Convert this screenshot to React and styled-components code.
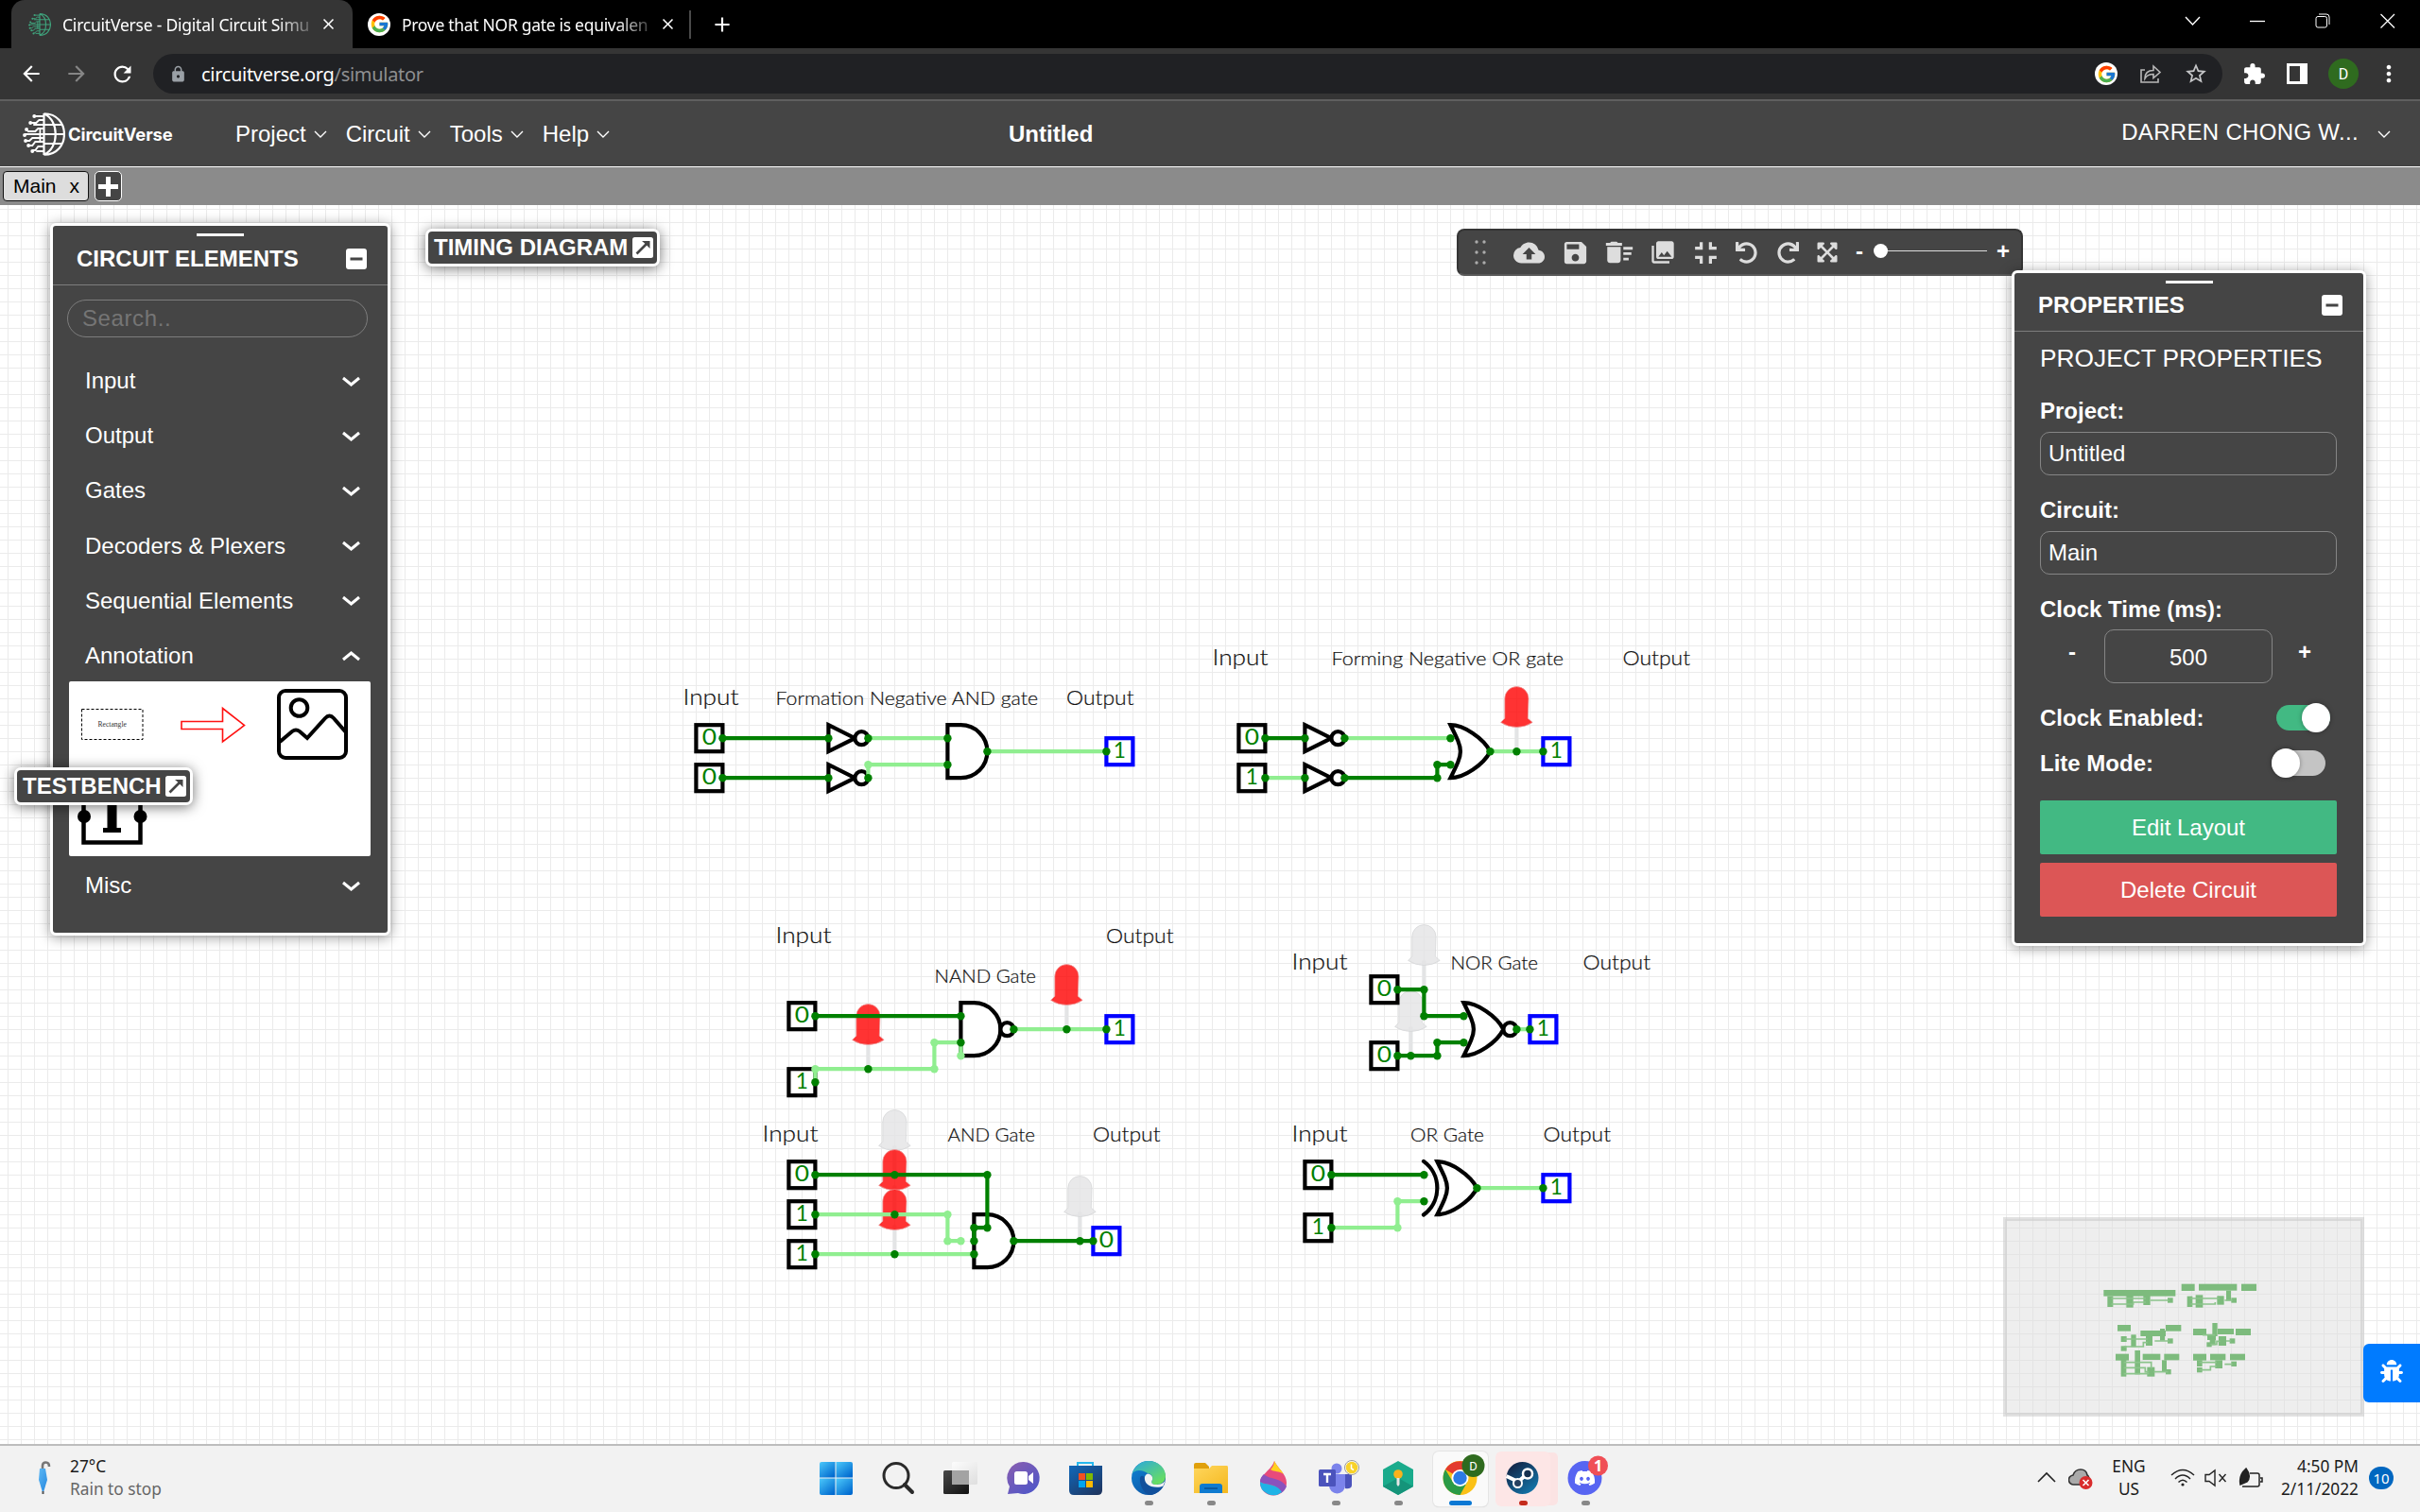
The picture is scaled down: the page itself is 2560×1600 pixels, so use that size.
import React from "react";
import styled, { createGlobalStyle } from "styled-components";
import {
  MdBackup, MdSave, MdDeleteSweep, MdPhotoLibrary, MdFullscreenExit, MdExtension,
  MdStarBorder, MdLock, MdAdd, MdClose, MdMoreVert, MdArrowBack, MdArrowForward, MdRefresh,
} from "react-icons/md";
import { FaBug, FaExpandArrowsAlt, FaUndo, FaRedo, FaDiscord } from "react-icons/fa";
import { FcGoogle } from "react-icons/fc";

const UI = `"Liberation Sans", Arial, sans-serif`;
const OS = `"Noto Sans", "Open Sans", sans-serif`;
const DARK = "#454545";

const Global = createGlobalStyle`
  * { box-sizing: border-box; }
  body { margin: 0; background: #fff; overflow: hidden; }
  svg { display: block; flex: none; }
  button, input { font: inherit; }
`;

const Screen = styled.div`
  width: 2560px;
  height: 1600px;
  display: flex;
  flex-direction: column;
  font-family: ${UI};
  font-size: 24px;
  overflow: hidden;
`;

/* ---------- browser chrome ---------- */
const TabStrip = styled.div`
  height: 51px;
  background: #000;
  display: flex;
  align-items: stretch;
  padding-left: 12px;
  font-family: ${OS};
  font-size: 17.5px;
  color: #fff;
`;
const BrowserTab = styled.div`
  width: ${(p) => p.$w}px;
  display: flex;
  align-items: center;
  padding: 0 0 0 ${(p) => p.$pad}px;
  background: ${(p) => (p.$active ? "#353535" : "transparent")};
  border-radius: 14px 14px 0 0;
`;
const TabTitle = styled.div`
  width: 264px;
  margin-left: 12px;
  white-space: nowrap;
  letter-spacing: ${(p) => p.$ls}px;
  mask-image: linear-gradient(to right, #000 86%, transparent 103%);
`;
const TabClose = styled.div`
  margin-left: 8px;
`;
const Divider = styled.div`
  width: 2px;
  height: 30px;
  align-self: center;
  background: #4a4a4a;
`;
const NewTab = styled.div`
  align-self: center;
  margin-left: 20px;
`;
const WindowButtons = styled.div`
  margin-left: auto;
  display: flex;
  align-items: center;
  padding: 0 25px 8px 0;
  gap: 52px;
`;
const AddressRow = styled.div`
  height: 56px;
  background: #353535;
  border-bottom: 2px solid #5f5f5f;
  display: flex;
  align-items: center;
  padding: 0 19px 0 20px;
  color: #fff;
`;
const NavButtons = styled.div`
  display: flex;
  gap: 22px;
  width: 142px;
`;
const Omnibox = styled.div`
  width: 2189px;
  height: 42px;
  border-radius: 21px;
  background: #202124;
  display: flex;
  align-items: center;
  padding: 0 15px 0 17px;
  font-family: ${OS};
  font-size: 20px;
  letter-spacing: -0.3px;
`;
const Url = styled.div`
  margin-left: 15px;
  margin-right: auto;
  span { color: #8e8f91; }
`;
const OmniIcons = styled.div`
  display: flex;
  align-items: center;
  gap: 23px;
  color: #c4c5c7;
`;
const ExtIcons = styled.div`
  display: flex;
  align-items: center;
  margin-left: auto;
  gap: 22px;
`;
const Avatar = styled.div`
  width: 32px;
  height: 32px;
  margin-right: -4px;
  border-radius: 50%;
  background: #2f6b1f;
  display: grid;
  place-items: center;
  font: 16px Roboto, sans-serif;
`;
const GoogleDot = styled.div`
  width: 24px;
  height: 24px;
  border-radius: 50%;
  background: #fff;
  display: grid;
  place-items: center;
`;

/* ---------- site header ---------- */
const Header = styled.header`
  height: 70px;
  background: ${DARK};
  border-bottom: 1px solid #fff;
  color: #fff;
  display: grid;
  grid-template-columns: 249px 818px 89px 1fr;
  align-items: center;
`;
const Brand = styled.div`
  display: flex;
  align-items: center;
  padding-left: 24px;
  gap: 3px;
  font: 700 18.4px Inter, sans-serif;
  letter-spacing: -0.1px;
`;
const Menu = styled.nav`
  display: flex;
  gap: 21px;
`;
const MenuItem = styled.div`
  display: flex;
  align-items: center;
  gap: 9px;
`;
const HeaderTitle = styled.div`
  font-weight: 700;
`;
const User = styled.div`
  display: flex;
  align-items: center;
  justify-content: flex-end;
  gap: 21px;
  padding-right: 32px;
  span { position: relative; top: -2px; letter-spacing: 0.32px; }
`;
const CircuitTabs = styled.div`
  height: 40px;
  background: #8b8b8b;
  display: flex;
  align-items: center;
  padding: 0 3px;
  gap: 6px;
`;
const CircuitTab = styled.div`
  width: 91px;
  height: 32px;
  background: #ddd;
  border: 1px solid #111;
  border-radius: 4px;
  color: #000;
  font-size: 21px;
  display: flex;
  align-items: center;
  justify-content: space-between;
  padding: 0 9px 0 10px;
`;
const AddCircuit = styled.div`
  width: 29px;
  height: 32px;
  background: ${DARK};
  border: 1px solid #fff;
  border-radius: 5px;
  display: grid;
  place-items: center;
`;

/* ---------- workspace ---------- */
const Workspace = styled.main`
  position: relative;
  height: 1311px;
  background-color: #fff;
  background-image: linear-gradient(to right, #ebebeb 1px, transparent 1px),
    linear-gradient(to bottom, #ebebeb 1px, transparent 1px);
  background-size: 14px 14px;
  background-position: 8px 4px;
`;
const Floating = styled.section`
  position: absolute;
  left: ${(p) => p.$x}px;
  top: ${(p) => p.$y}px;
`;
const Panel = styled(Floating)`
  width: ${(p) => p.$w}px;
  height: ${(p) => p.$h}px;
  background: ${DARK};
  border: 3px solid #fff;
  border-radius: 6px;
  box-shadow: 0 2px 14px rgba(0, 0, 0, 0.4);
  color: #fff;
`;
const PanelHead = styled.div`
  height: ${(p) => p.$h}px;
  border-bottom: 1px solid #7d7d7d;
  display: grid;
  grid-template-rows: 3px 1fr;
  padding: 8px 22px 4px 25px;
`;
const Handle = styled.div`
  width: 50px;
  height: 3px;
  margin-right: 3px;
  background: #fff;
  justify-self: center;
`;
const PanelTitle = styled.div`
  display: flex;
  align-items: center;
  justify-content: space-between;
  font-weight: 700;
`;
const Search = styled.input`
  display: block;
  margin: 15px 0 0 15px;
  width: 318px;
  height: 40px;
  border-radius: 20px;
  border: 1px solid #7d7d7d;
  background: transparent;
  padding: 0 15px;
  letter-spacing: 0.6px;
  &::placeholder { color: #757575; opacity: 1; }
`;
const Accordion = styled.div`
  padding-top: 17px;
`;
const AccordionRow = styled.div`
  height: 58.2px;
  display: flex;
  align-items: center;
  justify-content: space-between;
  padding: 0 30px 0 34px;
`;
const ElementTray = styled.div`
  width: 319px;
  height: 185px;
  margin: -2px 0 2px 17px;
  background: #fff;
  border-radius: 2px;
`;
const MiniPanel = styled(Floating)`
  width: ${(p) => p.$w}px;
  height: 40px;
  background: ${DARK};
  border: 3px solid #fff;
  border-radius: 7px;
  box-shadow: 0 2px 14px rgba(0, 0, 0, 0.55);
  color: #fff;
  font-weight: 700;
  display: flex;
  align-items: center;
  justify-content: space-between;
  padding: 0 4px 0 6px;
  white-space: nowrap;
`;

const QuickBar = styled(Floating)`
  width: 599px;
  height: 50px;
  background: ${DARK};
  border: 2px solid #353535;
  border-bottom-color: #585858;
  border-radius: 8px;
  color: #ddd;
  display: flex;
  align-items: center;
  padding-left: 13px;
`;
const QuickIcon = styled.div`
  width: ${(p) => p.$w}px;
  margin-right: ${(p) => p.$mr || 0}px;
  flex: none;
  display: flex;
  justify-content: center;
`;
const ZoomSlider = styled.div`
  display: flex;
  align-items: center;
  margin: 0 0 3px 11px;
  color: #fff;
  font-weight: 700;
`;
const SliderTrack = styled.div`
  width: 120px;
  height: 1.5px;
  background: #ddd;
  margin: 0 10px 0 11px;
  display: flex;
  align-items: center;
`;
const SliderKnob = styled.div`
  width: 15px;
  height: 15px;
  border-radius: 50%;
  background: #fff;
`;

const Form = styled.div`
  padding: 13px 28px 0 27px;
  display: flex;
  flex-direction: column;
`;
const FormTitle = styled.div`
  font-size: 26.3px;
  line-height: 31px;
  height: 32px;
  margin-bottom: 24px;
  white-space: nowrap;
`;
const Label = styled.label`
  font-weight: 700;
  height: 30px;
  line-height: 29px;
`;
const Field = styled.input`
  height: 46px;
  border: 1px solid #858585;
  border-radius: 10px;
  background: transparent;
  color: #fff;
  padding: 0 8px;
  margin: 7px 0 22px;
  width: 100%;
`;
const Stepper = styled.div`
  display: grid;
  grid-template-columns: 68px 178px 68px;
  text-align: center;
  margin: 6px 0 21px;
  font-weight: 700;
  line-height: 48px;
`;
const StepValue = styled.div`
  height: 57px;
  border: 1px solid #858585;
  border-radius: 10px;
  font-weight: 400;
  line-height: 57px;
`;
const SwitchRow = styled.div`
  display: flex;
  justify-content: space-between;
  align-items: center;
  font-weight: 700;
  height: 31px;
  margin-bottom: 17px;
  padding-right: ${(p) => (p.$on ? 7 : 12)}px;
`;
const Switch = styled.div`
  width: 57px;
  height: 27px;
  border-radius: 14px;
  display: flex;
  align-items: center;
  justify-content: ${(p) => (p.$on ? "flex-end" : "flex-start")};
  background: ${(p) => (p.$on ? "#42b983" : "#c4c4c4")};
`;
const Knob = styled.div`
  width: 30px;
  height: 31px;
  border-radius: 50%;
  background: #fff;
  flex: none;
  box-shadow: 0 0 5px rgba(0, 0, 0, 0.35);
`;
const Action = styled.button`
  height: 57px;
  margin: ${(p) => p.$mt}px 0 0;
  border: 0;
  border-radius: 2px;
  color: #fff;
  background: ${(p) => p.$bg};
`;
const Minimap = styled(Floating)`
  width: 382px;
  height: 211px;
`;
const BugButton = styled(Floating)`
  width: 60px;
  height: 62px;
  border-radius: 6px 0 0 6px;
  background: #007bff;
  color: #fff;
  display: grid;
  place-items: center;
  padding-bottom: 4px;
`;

/* ---------- taskbar ---------- */
const Taskbar = styled.footer`
  height: 72px;
  background: #f2f2f2;
  border-top: 2px solid #bdbdbd;
  display: grid;
  grid-template-columns: 852px 858px 1fr;
  font-family: ${OS};
  font-size: 17.3px;
  color: #1b1b1b;
`;
const Weather = styled.div`
  display: flex;
  align-items: center;
  padding: 0 0 3px 38px;
  gap: 16px;
  line-height: 24px;
  span { color: #666; }
`;
const Apps = styled.div`
  display: flex;
  align-items: center;
`;
const AppSlot = styled.div`
  position: relative;
  width: 66px;
  height: 60px;
  display: grid;
  grid-template-rows: 42px 8px;
  align-content: center;
  justify-items: center;
  align-items: center;
`;
const AppTile = styled.div`
  position: absolute;
  z-index: 0;
  left: 4px;
  top: 1px;
  width: 58px;
  height: 58px;
  border-radius: 6px;
  background: ${(p) => p.$bg};
  box-shadow: ${(p) => p.$shadow};
`;
const Art = styled.svg`
  position: relative;
  top: 4px;
  width: 38px;
  height: 38px;
  overflow: visible;
`;
const Dot = styled.div`
  position: relative;
  top: 4px;
  width: ${(p) => p.$w}px;
  height: 5px;
  border-radius: 3px;
  background: ${(p) => p.$c};
`;
const Tray = styled.div`
  display: flex;
  align-items: center;
  justify-content: flex-end;
  padding: 0 28px 3px 0;
  line-height: 24px;
`;
const TrayCell = styled.div`
  width: ${(p) => p.$w}px;
  display: grid;
  justify-items: ${(p) => p.$align || "center"};
  white-space: nowrap;
`;
const CountBadge = styled.div`
  width: 26px;
  height: 24px;
  margin-left: 11px;
  border-radius: 12px;
  background: #0067c0;
  color: #fff;
  font-size: 15px;
  display: grid;
  place-items: center;
`;

/* ---------- small drawings ---------- */
const Chevron = ({ w = 12, h = 7, up, sw = 1.4, color = "#fff" }) => (
  <svg width={w} height={h} viewBox={`0 0 ${w} ${h}`} overflow="visible">
    <path d={up ? `M0 ${h}L${w / 2} 0L${w} ${h}` : `M0 0L${w / 2} ${h}L${w} 0`} fill="none" stroke={color} strokeWidth={sw} />
  </svg>
);
const Google = () => <GoogleDot><FcGoogle size={21} /></GoogleDot>;
const MinimizeIcon = () => (
  <svg width="22" height="22" viewBox="0 0 22 22"><rect width="22" height="22" rx="3" fill="#fff" /><rect x="4.500" y="9.500" width="13" height="3" fill={DARK} /></svg>
);
const ExpandIcon = () => (
  <svg width="22" height="22" viewBox="0 0 22 22">
    <rect width="22" height="22" rx="2.5" fill="#fff" />
    <path d="M4.500 17.500L15 7" stroke={DARK} strokeWidth="2.6" /><path d="M10 4H18.500V12L15.800 9.300L13 6.500Z" fill={DARK} />
  </svg>
);
const Globe = ({ size, color, h = size }) => (
  <svg width={size} height={h} viewBox="0 0 44 46" preserveAspectRatio="none" fill="none" stroke={color} strokeWidth="2.1">
    <path d="M22 1.2C50 1.2 50 44.8 22 44.8M22 1V45M22 1.5C38 8 38 38 22 44.5M22 13H40M22 23H43M22 33H40" />
    <path d="M22 4H13M22 8H17L14 11H8M22 13H11M22 17H16L13 20H5M22 23H2M22 27H10L7 30H3M22 31H13L10 35H6M22 36H16L13 40H10M22 41H14M18 17V31" strokeWidth="1.8" />
    <g fill={color} stroke="none"><circle cx="12" cy="4" r="1.9" /><circle cx="8" cy="11" r="1.9" /><circle cx="4" cy="18" r="1.9" /><circle cx="2" cy="24" r="1.9" /><circle cx="3" cy="30" r="1.9" /><circle cx="6" cy="35" r="1.9" /><circle cx="10" cy="41" r="1.9" /></g>
  </svg>
);

/* ---------- circuit ---------- */
const ON = "#90ee90";
const OFF = "#008000";
const G = ({ k, j, children }) => <g transform={`translate(${k * 10} ${j * 10})`}>{children}</g>;
const Pin = ({ k, j, v, out }) => (
  <G k={k} j={j}>
    <rect x="-10" y="-10" width="20" height="20" fill="#fff" stroke={out ? "#00f" : "#000"} strokeWidth="3" />
    <text x="0" y="5" textAnchor="middle" fontSize="16.2" fill={OFF} fontFamily="Lato, sans-serif"
      transform={v === "0" ? "scale(1.16 1)" : undefined}>{v}</text>
  </G>
);
const shape = { fill: "#fff", stroke: "#000", strokeWidth: 3 };
const Not = ({ k, j }) => (
  <G k={k} j={j}><path d="M-10 -10L10 0L-10 10Z" {...shape} /><circle cx="15" r="5" {...shape} /></G>
);
const And = ({ k, j, neg }) => (
  <G k={k} j={j}><path d="M-10 -20H0A20 20 0 0 1 0 20H-10Z" {...shape} />{neg && <circle cx="25" r="5" {...shape} />}</G>
);
const Or = ({ k, j, neg, xor }) => (
  <G k={k} j={j}>
    <path d="M-10 -20C0 -20 15 -10 20 0C15 10 0 20 -10 20C0 0 0 0 -10 -20Z" {...shape} />
    {neg && <circle cx="25" r="5" {...shape} />}
    {xor && <path d="M-20.3 -20.2A25 25 0 0 1 -20.3 20.2" {...shape} fill="none" strokeLinecap="round" />}
  </G>
);
const Led = ({ k, j, on }) => (
  <G k={k} j={j}>
    <path d="M0 0V-22" stroke="#e3e4e5" strokeWidth="3" />
    <path d="M-9 -25V-40A9 9 0 0 1 9 -40L8.5 -25L12 -22A21.6 21.6 0 0 1 -12 -22Z"
      fill={on ? "rgba(255,0,0,.8)" : "rgba(227,228,229,.8)"} stroke={on ? "#e9a0a0" : "#d3d4d5"} strokeWidth=".5" />
  </G>
);
const wires = [
  [0, "54,55 62,55"], [0, "54,58 62,58"], [1, "65,55 71,55"], [1, "65,58 65,57 71,57"], [1, "74,56 83,56"],
  [0, "95,55 98,55"], [1, "95,58 98,58"], [1, "101,55 109,55"], [0, "101,58 108,58 108,57 109,57"], [1, "112,56 116,56"],
  [0, "61,76 72,76"], [1, "61,81 61,80 70,80 70,78 72,78 72,79"], [1, "76,77 83,77"],
  [0, "61,88 74,88 74,92 73,92 73,93"], [1, "61,91 71,91 71,93 72,93"], [1, "61,94 73,94"], [0, "76,93 82,93"],
  [0, "105,74 107,74 107,76 110,76"], [0, "105,79 108,79 108,78 110,78"], [1, "114,77 115,77"],
  [0, "100,88 107,88"], [1, "100,92 105,92 105,90 107,90"], [1, "111,89 116,89"],
];
const joints = "65,57 61,80 70,80 70,78 72,79 71,91 71,93 72,93 105,92 105,90";
const nodes =
  "54,55 62,55 54,58 62,58 65,55 71,55 65,58 71,57 74,56 83,56 95,55 98,55 95,58 98,58 101,55 109,55 101,58 108,58 108,57 109,57 112,56 114,56 116,56 " +
  "61,76 72,76 61,81 65,80 72,78 76,77 80,77 83,77 61,88 67,88 74,88 74,92 73,92 73,93 61,91 67,91 61,94 67,94 73,94 76,93 81,93 82,93 " +
  "105,74 107,74 107,76 110,76 105,79 106,79 108,79 108,78 110,78 114,77 115,77 100,88 107,88 100,92 107,90 111,89 116,89";
const labels = [
  ["Input", 722.5, 59, 746, 24], ["Formation Negative AND gate", 820.5, 277.5, 746, 20], ["Output", 1128, 71.5, 746, 22],
  ["Input", 1282.5, 59, 704, 24], ["Forming Negative OR gate", 1408.5, 245.5, 704, 20], ["Output", 1716.5, 71.5, 704, 22],
  ["Input", 820.5, 59, 998, 24], ["Output", 1170, 71.5, 998, 22], ["NAND Gate", 988.5, 107.5, 1040, 20],
  ["Input", 806.5, 59, 1208, 24], ["AND Gate", 1002.5, 92.5, 1208, 20], ["Output", 1156, 71.5, 1208, 22],
  ["Input", 1366.5, 59, 1026, 24], ["NOR Gate", 1534.5, 92.5, 1026, 20], ["Output", 1674.5, 71.5, 1026, 22],
  ["Input", 1366.5, 59, 1208, 24], ["OR Gate", 1492, 78, 1208, 20], ["Output", 1632.5, 71.5, 1208, 22],
];
const dots = (list, color) => list.split(" ").map((p) => {
  const [k, j] = p.split(",").map(Number);
  return <circle key={color + p} cx={k * 10} cy={j * 10} r="3" fill={color} />;
});

const Circuit = () => (
  <svg width="2560" height="1311" viewBox="0 217 2560 1311">
    <g transform="translate(8.4 11.2) scale(1.4)">
      <Pin k={53} j={55} v="0" /><Pin k={53} j={58} v="0" /><Not k={63} j={55} /><Not k={63} j={58} />
      <And k={72} j={56} /><Pin k={84} j={56} v="1" out />
      <Pin k={94} j={55} v="0" /><Pin k={94} j={58} v="1" /><Not k={99} j={55} /><Not k={99} j={58} />
      <Or k={110} j={56} /><Led k={114} j={56} on /><Pin k={117} j={56} v="1" out />
      <Pin k={60} j={76} v="0" /><Pin k={60} j={81} v="1" /><Led k={65} j={80} on /><Led k={80} j={77} on />
      <And k={73} j={77} neg /><Pin k={84} j={77} v="1" out />
      <Led k={67} j={88} /><Led k={67} j={91} on /><Led k={67} j={94} on />
      <Pin k={60} j={88} v="0" /><Pin k={60} j={91} v="1" /><Pin k={60} j={94} v="1" />
      <And k={74} j={93} /><Led k={81} j={93} /><Pin k={83} j={93} v="0" out />
      <Led k={107} j={74} /><Led k={106} j={79} /><Pin k={104} j={74} v="0" /><Pin k={104} j={79} v="0" />
      <Or k={111} j={77} neg /><Pin k={116} j={77} v="1" out />
      <Pin k={99} j={88} v="0" /><Pin k={99} j={92} v="1" /><Or k={109} j={89} xor /><Pin k={117} j={89} v="1" out />
      {wires.map(([v, pts]) => (
        <polyline key={pts} fill="none" stroke={v ? ON : OFF} strokeWidth="3"
          points={pts.split(" ").map((p) => p.split(",").map((n) => n * 10).join(",")).join(" ")} />
      ))}
      {dots(joints, ON)}
      {dots(nodes, OFF)}
    </g>
    <g fontFamily="Lato, sans-serif" fontWeight="300" fill="#111" stroke="#111" strokeWidth=".2">
      {labels.map(([t, x, w, y, s]) => (
        <text key={t + x + y} x={x} y={y} fontSize={s} textLength={w} lengthAdjust="spacingAndGlyphs">{t}</text>
      ))}
    </g>
  </svg>
);

const mapBlocks = [
  [406, 315, 228, 20], [418, 335, 18, 34], [478, 333, 22, 38], [532, 333, 22, 30], [609, 340, 17, 16],
  [653, 296, 42, 22], [708, 296, 121, 21], [843, 296, 48, 22], [795, 317, 15, 32], [671, 335, 17, 34], [698, 331, 23, 40], [766, 334, 22, 28], [811, 340, 17, 16],
  [450, 426, 42, 20], [603, 426, 49, 20], [523, 444, 80, 18], [585, 438, 15, 38], [461, 462, 18, 18], [461, 493, 18, 16], [493, 457, 16, 39], [540, 460, 21, 32], [609, 469, 17, 16],
  [444, 518, 42, 21], [530, 518, 56, 19], [598, 518, 48, 20], [505, 507, 17, 76], [461, 536, 17, 54], [544, 560, 24, 30], [591, 538, 15, 36], [603, 567, 17, 16],
  [690, 438, 42, 21], [825, 438, 48, 21], [768, 438, 51, 18], [751, 420, 16, 42], [735, 456, 27, 18], [743, 470, 18, 20], [733, 481, 16, 15], [771, 462, 24, 30], [806, 469, 17, 16],
  [690, 518, 42, 21], [744, 518, 49, 20], [807, 518, 48, 20], [702, 538, 17, 20], [702, 561, 17, 16], [760, 538, 23, 26], [811, 542, 17, 16],
];
const MapDrawing = () => (
  <svg width="382" height="211" viewBox="87 84 1146 633">
    <rect x="93" y="90" width="1134" height="621" fill="rgba(221,221,221,.5)" stroke="rgba(200,200,200,.55)" strokeWidth="12" />
    <g fill="#7dbb7d">{mapBlocks.map(([x, y, w, h]) => <rect key={`${x}-${y}`} x={x} y={y} width={w} height={h} />)}</g>
    <path d="M430 342H540M430 360H500V354H540M555 348H615M680 342H775M680 360H760V354M790 348H815M470 471H545M470 495H532V482H545M568 477H615M470 545H557V565M470 562H538V575H550M470 581H550M565 575H610M790 551H815M710 545H765M710 569H745V558H765M720 458H760M745 488H765V478H775M795 477H810"
      fill="none" stroke="#8cc48c" strokeWidth="5" />
  </svg>
);

const ElementIcons = () => (
  <svg width="319" height="185" viewBox="73 721 319 185" fill="none">
    <rect x="86.5" y="750.5" width="64.5" height="32" stroke="#000" strokeDasharray="3 2" />
    <text x="118.700" y="769" textAnchor="middle" fontSize="7.6" fontFamily="Liberation Serif, serif" fill="#333">Rectangle</text>
    <path d="M192 763.5H235.500V749.500L258.500 767.500L235.500 785V771.500H192Z" stroke="#f11" strokeWidth="1.600" />
    <g stroke="#000" strokeWidth="4">
      <rect x="295" y="731" width="71" height="71" rx="7" /><circle cx="316.500" cy="749" r="8.800" />
      <path d="M296 785L309 774Q313 771 317 774L325 781L344 760Q348.500 755 353 760L366 775" />
    </g>
    <g>
      <path d="M88.500 830V891.500H148.500V830Z" stroke="#000" strokeWidth="4.500" />
      <path d="M101 838H136V850H131Q130 846 123.500 846V876H128V881H109V876H113.500V846Q106 846 105 850H101Z" fill="#000" />
      <circle cx="89" cy="864" r="7" fill="#000" /><circle cx="148.500" cy="864" r="7" fill="#000" />
    </g>
  </svg>
);

/* ---------- taskbar icons ---------- */
const DefsSvg = styled.svg`
  position: absolute;
`;
const Defs = () => (
  <DefsSvg width="0" height="0">
    <defs>
      {[
        ["win", "#4cc9fb", "#0069cf"], ["chat", "#8b5fb0", "#4f56c8"], ["store", "#1168ba", "#1e3763"], ["edgeT", "#2aa7e0", "#6be15a"],
        ["edgeB", "#0d87d8", "#0f4f9e"], ["fold", "#ffd75e", "#f5b921"], ["steam", "#131a38", "#1378ad"], ["task", "#4a4a4a", "#161616"],
        ["grey", "#ffffff", "#dcdcdc"], ["umb", "#5cb8f5", "#2a8be0"],
      ].map(([id, a, b]) => (
        <linearGradient key={id} id={id} x1="0" y1="0" x2=".8" y2="1"><stop stopColor={a} /><stop offset="1" stopColor={b} /></linearGradient>
      ))}
    </defs>
  </DefsSvg>
);
const apps = [
  { art: <g fill="url(#win)"><path d="M1 3Q1 1 3 1H17.500V17.500H1Z" /><path d="M18.500 1H34Q36 1 36 3V17.500H18.500Z" /><path d="M1 18.500H17.500V36H3Q1 36 1 34Z" /><path d="M18.500 18.500H36V34Q36 36 34 36H18.500Z" /></g> },
  { art: <g fill="none" stroke="#2a2a2a"><circle cx="16" cy="15.500" r="13" strokeWidth="3" /><path d="M25 25L33 33" strokeWidth="4" strokeLinecap="round" /></g> },
  { art: <g><rect x="0" y="10" width="27" height="25" rx="1.500" fill="url(#task)" /><rect x="9" y="1" width="27" height="24" rx="1.500" fill="url(#grey)" opacity=".8" /><rect x="9" y="10" width="18" height="15" fill="#a3a3a3" /></g> },
  { art: <g><path d="M19 1A17 17 0 1 1 13 34L2 35L4 27A17 17 0 0 1 19 1Z" fill="url(#chat)" /><rect x="9" y="11" width="14" height="14" rx="2.500" fill="#fff" /><path d="M24 16L29 12V24L24 20Z" fill="#fff" /></g> },
  { art: <g><path d="M10 7V2H26V7" fill="none" stroke="#25b8ee" strokeWidth="2" /><path d="M1 5H36V31Q36 36 31 36H6Q1 36 1 31Z" fill="url(#store)" /><path d="M11 13h7v7h-7z" fill="#f25022" /><path d="M19 13h7v7h-7z" fill="#7fba00" /><path d="M11 21h7v7h-7z" fill="#00a4ef" /><path d="M19 21h7v7h-7z" fill="#ffb900" /></g> },
  { art: <g><circle cx="19" cy="18" r="18" fill="url(#edgeB)" /><path d="M1.500 14C5 4 12 0 19 0C29 0 37 7 37 16C37 22 32 25 27 25C23 25 21 23 23 20C24 17 22 13 18 13C12 9 4 9 1.500 14Z" fill="url(#edgeT)" /><path d="M10 18C9 26 15 36 22 36C27 35 32 31 34 27C28 30 16 28 15 18C13 15 11 15 10 18Z" fill="#11509c" /><path d="M18 13.500C14 15 14 20 17 24C21 28 30 29 34.500 26.500L37 20C35 24 31 25 27 25C23 25 21 23 23 20C24 17 22 14 18 13.500Z" fill="#f2f2f2" /></g>, dot: 9 },
  { art: <g><path d="M1 4Q1 2 3 2H13L17 6V12H1Z" fill="#e0a00c" /><path d="M1 8H17L20 5H36Q37 5 37 7V34H1Z" fill="url(#fold)" /><path d="M7 34V27Q7 24 10 24H28Q31 24 31 27V34Z" fill="#0f7bd0" /><path d="M12 29H26" stroke="#0a4f92" strokeWidth="1.500" /></g>, dot: 9 },
  { art: <g><path d="M20 0C24 8 33 14 33 23A14 13.500 0 0 1 5 23C5 14 17 10 20 0Z" fill="#e84b7b" /><path d="M20 0C23 6 27 9 30 14C25 10 20 12 16 9C19 6 20 3 20 0Z" fill="#ffd21f" /><path d="M9 14C15 20 26 17 33 27C31 31 29 33 27 34C22 22 12 26 5 22C5 18 7 16 9 14Z" fill="#8a52bd" /><path d="M5 22C11 26 22 23 28 33A14 13.500 0 0 1 5 22Z" fill="#1fb3e6" /></g> },
  { art: <g><circle cx="20" cy="8" r="5.500" fill="#7b83eb" /><path d="M28 14H36V26Q35 30 29 29Z" fill="#4b53bc" /><path d="M12 14H29V26A8.500 8.500 0 0 1 12 26Z" fill="#7b83eb" /><rect x="1" y="9" width="18" height="18" rx="1.500" fill="#4b53bc" /><path d="M6 14H14M10 14V23" stroke="#fff" strokeWidth="2.400" /><circle cx="36" cy="7" r="7.500" fill="#fff" stroke="#999" /><circle cx="36" cy="7" r="6.300" fill="#f8d22a" /><path d="M35.500 3.500V8L38 9.500" fill="none" stroke="#fff" strokeWidth="1.500" /></g>, dot: 9 },
  { art: <g><path d="M19 0L35 9V27L19 36L3 27V9Z" fill="#1aab8c" /><path d="M3 27L19 18L35 27L19 36Z" fill="#15947a" /><circle cx="19" cy="14" r="4.800" fill="#f9b21d" /><path d="M17.500 18H20.500V25L19 27L17.500 25Z" fill="#e6e6e6" /></g>, dot: 9 },
  { tile: ["#fafafa", "0 0 0 1px #e5e5e5, 0 1px 1px #ccc"], art: <g><circle cx="18.500" cy="18" r="18" fill="#fbc116" /><path d="M18.500 18L3 9A18 18 0 0 1 34 9H18.500Z" fill="#e33b2e" /><path d="M3 9A18 18 0 0 0 18.500 36L26 22.500L11 22.500Z" fill="#2a9b47" /><circle cx="18.500" cy="18" r="9" fill="#fff" /><circle cx="18.500" cy="18" r="7.200" fill="#2c7be5" /><circle cx="32.500" cy="5" r="12" fill="#2f6b1f" /><text x="32.500" y="9.500" textAnchor="middle" fontSize="13" fill="#fff" fontFamily="Roboto, sans-serif">D</text></g>, dot: 24, dc: "#0a78d4" },
  { tile: ["#fde6e6", "9px 0 0 -1px #fbe3e3"], art: <g><circle cx="18.500" cy="18" r="17" fill="url(#steam)" /><path d="M1.500 16L14 22L22 15" stroke="#fff" strokeWidth="4" fill="none" /><circle cx="13.500" cy="23.500" r="4.500" fill="#25405f" stroke="#fff" strokeWidth="2" /><circle cx="24" cy="13.500" r="5" fill="#16314f" stroke="#fff" strokeWidth="2.500" /></g>, dot: 9, dc: "#c42b1c" },
  { art: <g><circle cx="18.500" cy="18" r="18" fill="#5865f2" /><FaDiscord x="7" y="6.500" size={23} color="#fff" /><circle cx="32.500" cy="5" r="10.500" fill="#f04f56" /><text x="32.500" y="10.500" textAnchor="middle" fontSize="16" fontWeight="700" fill="#fff" fontFamily="Noto Sans, sans-serif">1</text></g>, dot: 9 },
];

const sections = ["Input", "Output", "Gates", "Decoders & Plexers", "Sequential Elements"];

export default function App() {
  return (
    <Screen>
      <Global />
      <Defs />
      <TabStrip>
        <BrowserTab $w={361} $pad={18} $active>
          <Globe size={24} color="#3fa37c" />
          <TabTitle $ls={-0.22}>CircuitVerse - Digital Circuit Simu</TabTitle>
          <TabClose><MdClose size={19} /></TabClose>
        </BrowserTab>
        <BrowserTab $w={356} $pad={16}>
          <Google />
          <TabTitle $ls={-0.3}>Prove that NOR gate is equivalen</TabTitle>
          <TabClose><MdClose size={19} /></TabClose>
        </BrowserTab>
        <Divider />
        <NewTab><MdAdd size={26} /></NewTab>
        <WindowButtons>
          <Chevron w={15} h={8} />
          <svg width="18" height="16" viewBox="0 0 18 16"><path d="M1 8.500H17" stroke="#fff" strokeWidth="1.300" /></svg>
          <svg width="16" height="16" viewBox="0 0 16 16" fill="none" stroke="#fff"><rect x="1" y="3.500" width="11.500" height="11.500" rx="2" /><path d="M4 1H12Q15 1 15 4V12" /></svg>
          <svg width="18" height="16" viewBox="0 0 18 16"><path d="M1.500 1L16 15.500M16 1L1.500 15.500" stroke="#fff" strokeWidth="1.300" /></svg>
        </WindowButtons>
      </TabStrip>
      <AddressRow>
        <NavButtons><MdArrowBack size={26} /><MdArrowForward size={26} color="#868686" /><MdRefresh size={27} /></NavButtons>
        <Omnibox>
          <MdLock size={19} color="#9aa0a6" />
          <Url>circuitverse.org<span>/simulator</span></Url>
          <OmniIcons>
            <Google />
            <svg width="24" height="24" viewBox="0 0 24 24" fill="none" stroke="#b8b8b8" strokeWidth="1.600"><path d="M6 8H2V21H20V17" /><path d="M6 17C6 11 9 8.500 15 8.500V4L22 10.500L15 16.500V12.500C11 12.500 8 13.500 6 17Z" /></svg>
            <MdStarBorder size={26} />
          </OmniIcons>
        </Omnibox>
        <ExtIcons>
          <MdExtension size={25} />
          <svg width="22" height="22" viewBox="0 0 22 22"><rect width="22" height="22" fill="#fff" /><rect x="3" y="3" width="11" height="16" fill="#353535" /></svg>
          <Avatar>D</Avatar>
          <MdMoreVert size={28} />
        </ExtIcons>
      </AddressRow>

      <Header>
        <Brand><Globe size={45} h={46} color="#fff" />CircuitVerse</Brand>
        <Menu>
          {["Project", "Circuit", "Tools", "Help"].map((m) => <MenuItem key={m}>{m}<Chevron w={12} h={6} /></MenuItem>)}
        </Menu>
        <HeaderTitle>Untitled</HeaderTitle>
        <User><span>DARREN CHONG W...</span><Chevron w={12} h={6} /></User>
      </Header>
      <CircuitTabs>
        <CircuitTab><span>Main</span><span>x</span></CircuitTab>
        <AddCircuit><svg width="21" height="21" viewBox="0 0 21 21"><path d="M10.500 0V21M0 10.500H21" stroke="#fff" strokeWidth="5" /></svg></AddCircuit>
      </CircuitTabs>

      <Workspace>
        <Circuit />

        <Panel $x={53} $y={19} $w={360} $h={754}>
          <PanelHead $h={63}>
            <Handle />
            <PanelTitle>CIRCUIT ELEMENTS<MinimizeIcon /></PanelTitle>
          </PanelHead>
          <Search placeholder="Search.." />
          <Accordion>
            {sections.map((s) => <AccordionRow key={s}>{s}<Chevron w={17} h={7} sw={3} /></AccordionRow>)}
            <AccordionRow>Annotation<Chevron w={17} h={7} sw={3} up /></AccordionRow>
            <ElementTray><ElementIcons /></ElementTray>
            <AccordionRow>Misc<Chevron w={17} h={7} sw={3} /></AccordionRow>
          </Accordion>
        </Panel>

        <MiniPanel $x={450} $y={25} $w={248}>TIMING DIAGRAM<ExpandIcon /></MiniPanel>
        <MiniPanel $x={15} $y={595} $w={189}>TESTBENCH<ExpandIcon /></MiniPanel>

        <QuickBar $x={1541} $y={25}>
          <QuickIcon $w={20} $mr={16}>
            <svg width="14" height="26" viewBox="0 0 14 26" fill="#aaa">
              {[2, 13, 24].map((y) => <g key={y}><circle cx="3" cy={y} r="1.700" /><circle cx="11" cy={y} r="1.700" /></g>)}
            </svg>
          </QuickIcon>
          <QuickIcon $w={50}><MdBackup size={33} /></QuickIcon>
          <QuickIcon $w={48}><MdSave size={31} /></QuickIcon>
          <QuickIcon $w={46}><MdDeleteSweep size={34} /></QuickIcon>
          <QuickIcon $w={46}><MdPhotoLibrary size={28} /></QuickIcon>
          <QuickIcon $w={44}><MdFullscreenExit size={39} /></QuickIcon>
          <QuickIcon $w={42}><FaUndo size={23} /></QuickIcon>
          <QuickIcon $w={46}><FaRedo size={23} /></QuickIcon>
          <QuickIcon $w={38}><FaExpandArrowsAlt size={24} /></QuickIcon>
          <ZoomSlider><span>-</span><SliderTrack><SliderKnob /></SliderTrack><span>+</span></ZoomSlider>
        </QuickBar>

        <Panel $x={2128} $y={69} $w={375} $h={715}>
          <PanelHead $h={62}>
            <Handle />
            <PanelTitle>PROPERTIES<MinimizeIcon /></PanelTitle>
          </PanelHead>
          <Form>
            <FormTitle>PROJECT PROPERTIES</FormTitle>
            <Label>Project:</Label>
            <Field defaultValue="Untitled" />
            <Label>Circuit:</Label>
            <Field defaultValue="Main" />
            <Label>Clock Time (ms):</Label>
            <Stepper><span>-</span><StepValue>500</StepValue><span>+</span></Stepper>
            <SwitchRow $on>Clock Enabled:<Switch $on><Knob /></Switch></SwitchRow>
            <SwitchRow>Lite Mode:<Switch><Knob /></Switch></SwitchRow>
            <Action $mt={7} $bg="#42b983">Edit Layout</Action>
            <Action $mt={9} $bg="#dc5656">Delete Circuit</Action>
          </Form>
        </Panel>

        <Minimap $x={2119} $y={1071}><MapDrawing /></Minimap>
        <BugButton $x={2500} $y={1205}><FaBug size={24} /></BugButton>
      </Workspace>

      <Taskbar>
        <Weather>
          <svg width="20" height="36" viewBox="0 0 20 36"><path d="M7 8V5Q7 1.500 10.500 1.500T14 6" fill="none" stroke="#777" strokeWidth="2.600" /><path d="M4 8H10L12 20L8 33L7 33L3 20Z" fill="url(#umb)" /><path d="M7.500 32V35" stroke="#555" strokeWidth="2" /></svg>
          <div>27°C<br /><span>Rain to stop</span></div>
        </Weather>
        <Apps>
          {apps.map((a, i) => (
            <AppSlot key={i}>
              {a.tile && <AppTile $bg={a.tile[0]} $shadow={a.tile[1]} />}
              <Art viewBox="0 0 38 38">{a.art}</Art>
              {a.dot && <Dot $w={a.dot} $c={a.dc || "#888"} />}
            </AppSlot>
          ))}
        </Apps>
        <Tray>
          <TrayCell $w={36}><Chevron w={18} h={9} color="#222" sw={1.6} up /></TrayCell>
          <TrayCell $w={36}>
            <svg width="26" height="24" viewBox="0 0 26 24"><path d="M6 19A5 5 0 0 1 5 9Q7 3 13 3T20 9Q23 11 22 19Z" fill="#aaa" stroke="#333" strokeWidth="1.600" /><circle cx="18.500" cy="17" r="7" fill="#d92c2c" /><path d="M15.500 14L21.500 20M21.500 14L15.500 20" stroke="#fff" strokeWidth="1.600" /></svg>
          </TrayCell>
          <TrayCell $w={66}><span>ENG</span><span>US</span></TrayCell>
          <TrayCell $w={47}>
            <svg width="26" height="20" viewBox="0 0 26 20" fill="none" stroke="#222" strokeWidth="1.500"><path d="M1 7Q13 -4 25 7M5 11Q13 3 21 11M8.500 14.500Q13 10 17.500 14.500" /><circle cx="13" cy="17" r="1.600" fill="#222" stroke="none" /></svg>
          </TrayCell>
          <TrayCell $w={24}>
            <svg width="24" height="20" viewBox="0 0 24 20" fill="none" stroke="#222" strokeWidth="1.400"><path d="M1 6.500V13.500H5L11 18V2L5 6.500Z" /><path d="M15.500 6L22.500 14M22.500 6L15.500 14" /></svg>
          </TrayCell>
          <TrayCell $w={50}>
            <svg width="26" height="22" viewBox="0 0 26 22" fill="none" stroke="#222" strokeWidth="1.500"><path d="M12 6H20Q22 6 22 8V18Q22 20 20 20H4M23 11H25V15H23" /><path d="M8 1Q14 9 9 15L2 18Q0 8 8 1Z" fill="#222" /></svg>
          </TrayCell>
          <TrayCell $w={89} $align="end"><span>4:50 PM</span><span>2/11/2022</span></TrayCell>
          <CountBadge>10</CountBadge>
        </Tray>
      </Taskbar>
    </Screen>
  );
}
